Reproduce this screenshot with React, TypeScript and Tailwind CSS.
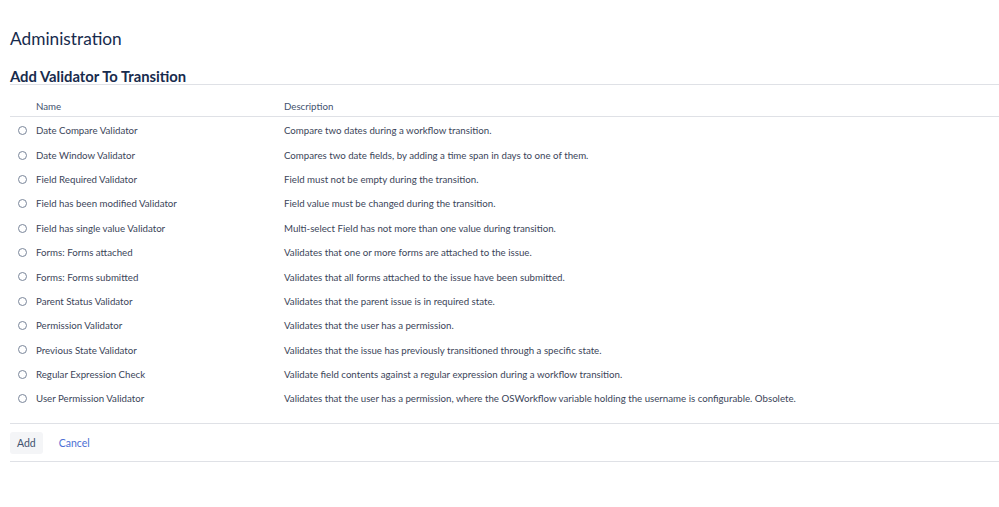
import { useState } from 'react';

const validators: [string, string][] = [
  ['Date Compare Validator', 'Compare two dates during a workflow transition.'],
  ['Date Window Validator', 'Compares two date fields, by adding a time span in days to one of them.'],
  ['Field Required Validator', 'Field must not be empty during the transition.'],
  ['Field has been modified Validator', 'Field value must be changed during the transition.'],
  ['Field has single value Validator', 'Multi-select Field has not more than one value during transition.'],
  ['Forms: Forms attached', 'Validates that one or more forms are attached to the issue.'],
  ['Forms: Forms submitted', 'Validates that all forms attached to the issue have been submitted.'],
  ['Parent Status Validator', 'Validates that the parent issue is in required state.'],
  ['Permission Validator', 'Validates that the user has a permission.'],
  ['Previous State Validator', 'Validates that the issue has previously transitioned through a specific state.'],
  ['Regular Expression Check', 'Validate field contents against a regular expression during a workflow transition.'],
  [
    'User Permission Validator',
    'Validates that the user has a permission, where the OSWorkflow variable holding the username is configurable. Obsolete.',
  ],
];

export default function App() {
  const [selected, setSelected] = useState<number | null>(null);

  return (
    <div className="min-h-[507px] w-full bg-white pl-[10px] font-['Lato',sans-serif] text-[#172b4d]">
      <h1 className="pt-[28px] text-[17.3px] leading-[22px] text-[#172b4d]">Administration</h1>

      <h2 className="mt-[18px] border-b border-[#dfe1e6] text-[14.8px] font-bold leading-[16px]">
        Add Validator To Transition
      </h2>

      <table className="mt-[15px] w-full border-collapse text-[9.7px]">
        <thead>
          <tr className="border-b border-[#dfe1e6]">
            <th className="w-[274px] pb-[4px] pl-[26px] text-left font-normal leading-[12px] text-[#42526e]">Name</th>
            <th className="pb-[4px] text-left font-normal leading-[12px] text-[#42526e]">Description</th>
          </tr>
        </thead>
        <tbody>
          <tr className="h-[2px]" />
          {validators.map(([name, desc], i) => (
            <tr key={name} className="h-[24.36px]">
              <td className="pl-[8px] align-middle">
                <label className="flex items-center gap-[9px]">
                  <input
                    type="radio"
                    name="validator"
                    checked={selected === i}
                    onChange={() => setSelected(i)}
                    className="h-[9px] w-[9px] appearance-none rounded-full border border-[#7a869a] checked:border-[3px] checked:border-[#0052cc]"
                  />
                  <span className="text-[#3b4559]">{name}</span>
                </label>
              </td>
              <td className="align-middle text-[#3b4559]">{desc}</td>
            </tr>
          ))}
        </tbody>
      </table>

      <div className="mt-[12px] flex items-center gap-[6px] border-y border-[#dfe1e6] pb-[7px] pt-[8px] text-[10.5px]">
        <button className="rounded-[3px] bg-[#f4f5f7] px-[7px] leading-[22px] text-[#42526e]">Add</button>
        <button className="px-[10px] leading-[22px] text-[#4c6fd4]">Cancel</button>
      </div>
    </div>
  );
}
